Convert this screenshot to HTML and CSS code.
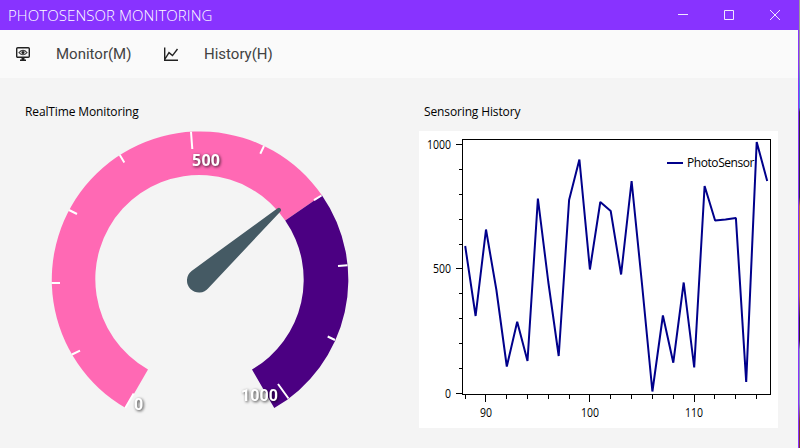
FILE: index.html
```html
<!DOCTYPE html>
<html lang="en">
<head>
<meta charset="utf-8">
<title>PHOTOSENSOR MONITORING</title>
<link rel="stylesheet" href="styles.css">
</head>
<body>
<div class="window">
  <header class="titlebar">
    <h1 class="title">PHOTOSENSOR MONITORING</h1>
    <div class="controls">
      <svg class="control" viewBox="0 0 10 10"><path d="M0 4.500h10"/></svg>
      <svg class="control" viewBox="0 0 10 10"><path d="M.5.5h9v9h-9z"/></svg>
      <svg class="control" viewBox="0 0 10 10"><path d="M0 0l10 10M10 0L0 10"/></svg>
    </div>
  </header>
  <nav class="menu">
    <a class="item monitor">
      <svg class="icon" viewBox="0 0 16 16"><rect x="1.700" y="1.700" width="12.600" height="9.600" rx="1" fill="none" stroke="#222" stroke-width="1.400"/><path d="M6.500 11.500h3v2H11V15H5v-1.500h1.500z" fill="#222"/><path d="M4 6.600Q8 2.200 12 6.600Q8 11 4 6.600z" fill="none" stroke="#444" stroke-width="1.100"/><circle cx="8" cy="6.600" r="1.500" fill="#222"/></svg>
      <span>Monitor(M)</span>
    </a>
    <a class="item">
      <svg class="icon" viewBox="0 0 16 16"><path d="M1.700 1.500v12.700H15M1.700 13.500L6 6.600l3.500 3L14.500 3" fill="none" stroke="#222" stroke-width="1.400"/></svg>
      <span>History(H)</span>
    </a>
  </nav>
  <main class="content">
    <section class="panel">
      <h2 class="heading realtime">RealTime Monitoring</h2>
      <svg class="gauge" viewBox="40 124 320 300">
        <path fill="#ff69b4" d="M125.750 408.100A148.300 148.300 0 1 1 321.900 195.200L285.200 220.400A104 104 0 1 0 148 369.500z"/>
        <path fill="#4b0082" d="M321.900 195.200A148.300 148.300 0 0 1 274.250 408.100L252 369.500A104 104 0 0 0 285.200 220.400z"/>
        <path class="ticks" d="M125.300 408L133.700 393.500M72 354.500L80 350.600M51.500 282.900H60M69 210L77 214M119.800 155L124.300 162.500M191 131.700L192.300 149M264 146L260.300 153.700M321.500 195.500L314 200.200M347.500 265.200L338 266M335 340L327.700 336.500M288.500 398.500L278 384"/>
        <path fill="#455a64" d="M191.600 270.900L277.600 208.200A2.200 2.200 0 0 1 280.700 211.200L208.500 288A12.100 12.100 0 1 1 191.600 270.900z"/>
        <g class="scale">
          <text x="192" y="166" textLength="28">500</text>
          <text class="end" x="134" y="409.500" textLength="10">0</text>
          <text class="end" x="241" y="401" textLength="37">1000</text>
        </g>
      </svg>
    </section>
    <section class="panel">
      <h2 class="heading history">Sensoring History</h2>
      <svg class="chart" viewBox="419 131 359 297">
        <rect class="axis" x="462.500" y="139.500" width="308" height="255"/>
        <path class="axis" d="M456 144.500h6M456 268.500h6M456 393.500h6M459 169.500h3M459 194.500h3M459 219.500h3M459 244.500h3M459 293.500h3M459 318.500h3M459 343.500h3M459 368.500h3M465.500 395v4M485.500 395v7M506.500 395v4M527.500 395v4M548.500 395v4M569.500 395v4M589.500 395v7M610.500 395v4M631.500 395v4M652.500 395v4M673.500 395v4M694.500 395v7M714.500 395v4M735.500 395v4M756.500 395v4"/>
        <polyline class="series" points="465.200,246 475.600,316 486,229.500 496.400,290 506.800,366.500 517.200,321.700 527.500,361 537.900,198.500 548.300,282 558.700,356 569.100,200 579.400,159.500 589.900,269.500 600.300,202 610.700,211 621.100,274.500 631.600,181 642,284 652.400,391.500 662.900,315.500 673.300,362.700 683.700,282.500 694.200,367.500 704.600,186 715.100,220.500 725.500,219.500 735.900,218 746.200,382 756.700,142 767.200,181"/>
        <path class="series" d="M667 163h16"/>
        <g class="labels">
          <text x="687" y="167" textLength="67.500">PhotoSensor</text>
          <text x="427" y="149" textLength="24" lengthAdjust="spacingAndGlyphs">1000</text>
          <text x="433" y="273" textLength="18" lengthAdjust="spacingAndGlyphs">500</text>
          <text x="445" y="398" textLength="6" lengthAdjust="spacingAndGlyphs">0</text>
          <text x="480" y="417" textLength="12" lengthAdjust="spacingAndGlyphs">90</text>
          <text x="581" y="417" textLength="18" lengthAdjust="spacingAndGlyphs">100</text>
          <text x="685" y="417" textLength="18" lengthAdjust="spacingAndGlyphs">110</text>
        </g>
      </svg>
    </section>
  </main>
</div>
<div class="desktop"></div>
</body>
</html>
```
FILE: styles.css
```css
body { margin: 0; display: flex; width: 800px; height: 448px; overflow: hidden; font-family: "Open Sans", sans-serif; }
.window { box-sizing: border-box; width: 799px; height: 448px; background: #f4f4f4; border-right: 1px solid #8833ff; }
.titlebar { display: flex; justify-content: space-between; height: 30px; background: #8833ff; }
.title { margin: 0; padding-left: 8px; font-size: 15px; line-height: 31px; font-weight: 300; letter-spacing: .08px; color: #fff; }
.controls { display: flex; align-items: center; gap: 36px; padding-right: 18px; }
.control { width: 10px; height: 10px; fill: none; stroke: #f0e6ff; stroke-width: 1; }
.menu { display: flex; height: 48px; padding-left: 15px; background: #fafafa; font: 15px/48px Roboto, sans-serif; color: #424242; }
.item { display: flex; align-items: center; gap: 25px; }
.monitor { width: 148px; }
.icon { width: 16px; height: 16px; }
.content { display: grid; grid-template-columns: 419px 359px; padding-top: 24px; }
.heading { margin: 0; height: 22px; line-height: 20px; font-size: 12px; font-weight: 400; letter-spacing: -.13px; color: #000; }
.realtime { padding-left: 25px; }
.history { height: 29px; padding-left: 5px; }
.gauge { display: block; width: 320px; height: 300px; margin-left: 40px; }
.ticks { fill: none; stroke: #fff; stroke-width: 2; }
.scale { fill: #fff; font: 700 16px "Open Sans", sans-serif; filter: drop-shadow(1.5px 1.5px 1.5px rgba(0, 0, 0, .75)); }
.end { font-family: Roboto, sans-serif; }
.chart { display: block; width: 359px; height: 297px; background: #fff; }
.axis { fill: none; stroke: #000; stroke-width: 1; }
.series { fill: none; stroke: #00008b; stroke-width: 2; stroke-linejoin: bevel; }
.labels { font-size: 12px; fill: #000; }
.desktop { width: 1px; height: 448px; background: linear-gradient(#999 0 14%, #468bd9 19% 24%, #302b39 25% 44%, #c27935 46% 66%, #30232a 71% 76%, #8a98b8 78% 90%, #7f392b 94%); }
```
